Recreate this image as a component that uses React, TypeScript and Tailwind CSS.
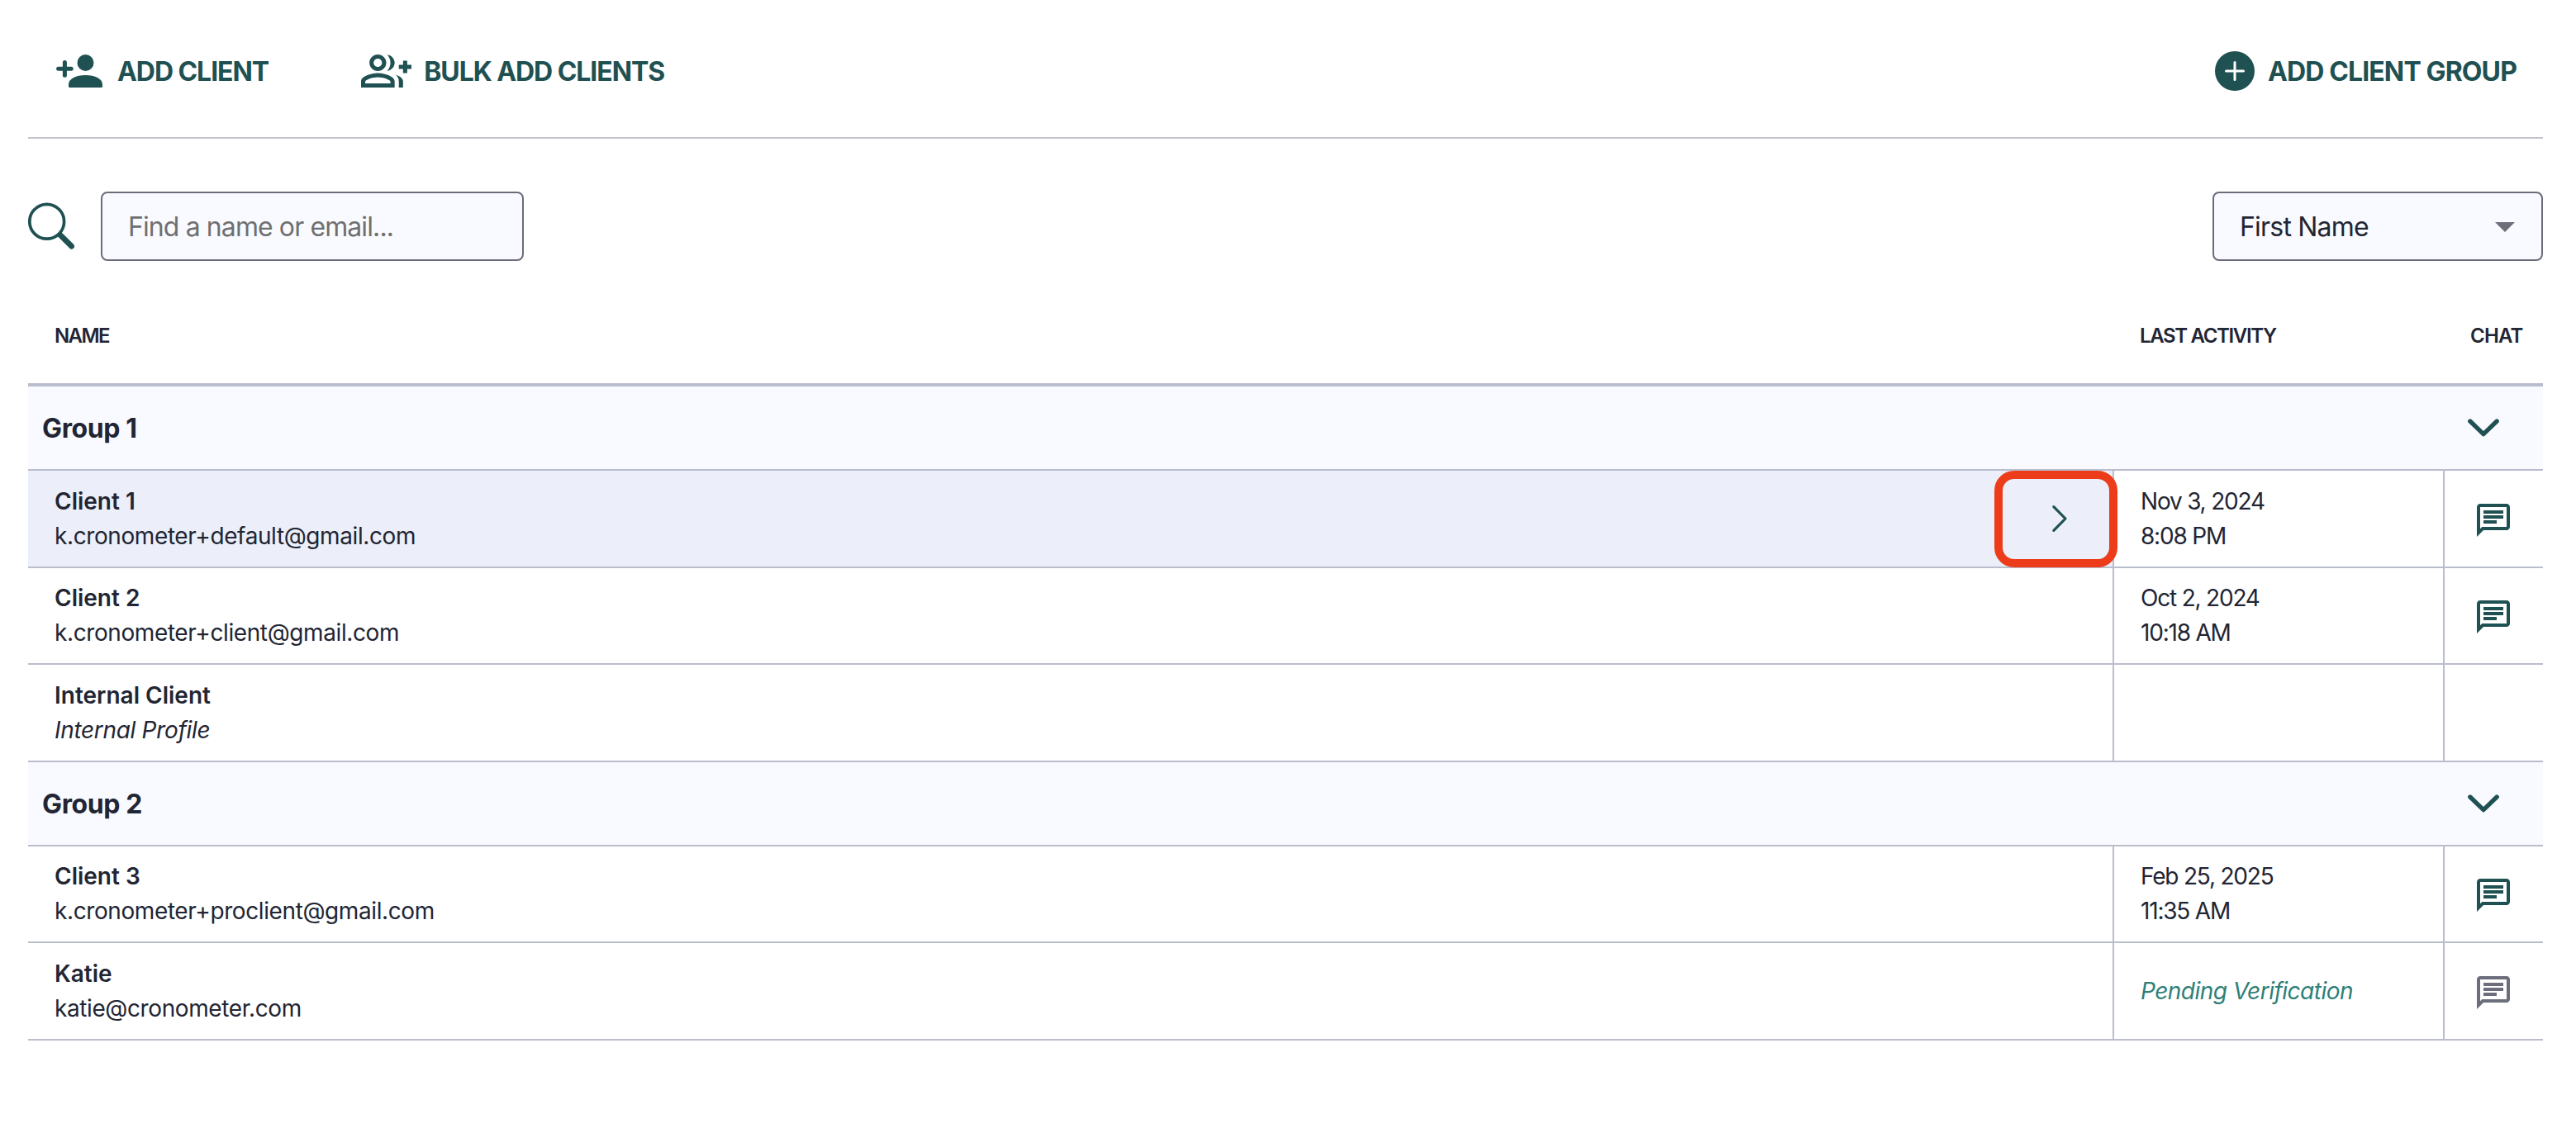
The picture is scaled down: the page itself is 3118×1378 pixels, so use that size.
import { useState } from 'react';

type Client = {
  name: string;
  detail: string;
  internal?: boolean;
  date?: string;
  time?: string;
  pending?: boolean;
  active?: boolean;
};

const groups: { name: string; clients: Client[] }[] = [
  {
    name: 'Group 1',
    clients: [
      { name: 'Client 1', detail: 'k.cronometer+default@gmail.com', date: 'Nov 3, 2024', time: '8:08 PM', active: true },
      { name: 'Client 2', detail: 'k.cronometer+client@gmail.com', date: 'Oct 2, 2024', time: '10:18 AM' },
      { name: 'Internal Client', detail: 'Internal Profile', internal: true },
    ],
  },
  {
    name: 'Group 2',
    clients: [
      { name: 'Client 3', detail: 'k.cronometer+proclient@gmail.com', date: 'Feb 25, 2025', time: '11:35 AM' },
      { name: 'Katie', detail: 'katie@cronometer.com', pending: true },
    ],
  },
];

function AddPersonIcon() {
  return (
    <svg className="w-14 h-10 shrink-0" viewBox="0 0 56 40" fill="currentColor">
      <circle cx="35.5" cy="10" r="10" />
      <path d="M15 38.5V36C15 29.5 24 25 35.5 25S56 29.5 56 36V38.5Q56 40 54.5 40H16.5Q15 40 15 38.5Z" />
      <path d="M10.4 9.5V25.2M2.6 17.3H18.2" stroke="currentColor" strokeWidth="5" strokeLinecap="round" />
    </svg>
  );
}

function AddPeopleIcon() {
  return (
    <svg className="w-[61px] h-10 shrink-0" viewBox="0 4 24 16" preserveAspectRatio="none" fill="currentColor">
      <path d="M22 9V7h-2v2h-2v2h2v2h2v-2h2V9z" />
      <path
        fillRule="evenodd"
        d="M8 12c2.21 0 4-1.79 4-4s-1.79-4-4-4-4 1.79-4 4 1.79 4 4 4zM8 6c1.1 0 2 .9 2 2s-.9 2-2 2-2-.9-2-2 .9-2 2-2z"
      />
      <path
        fillRule="evenodd"
        d="M8 13c-2.67 0-8 1.34-8 4v3h16v-3c0-2.66-5.33-4-8-4zM14 18H2v-.99C2.2 16.29 5.3 15 8 15s5.8 1.29 6 2v1z"
      />
      <path d="M12.51 4.05C13.43 5.11 14 6.49 14 8s-.57 2.89-1.49 3.95C14.47 11.7 16 10.04 16 8s-1.53-3.7-3.49-3.95z" />
      <path d="M16.53 13.83C17.42 14.66 18 15.7 18 17v3h2v-3c0-1.45-1.59-2.51-3.47-3.17z" />
    </svg>
  );
}

function PlusCircleIcon() {
  return (
    <svg className="w-12 h-12 shrink-0" viewBox="0 0 48 48" fill="none">
      <circle cx="24" cy="24" r="24" fill="currentColor" />
      <path d="M24 13.5V34.5M13.5 24H34.5" stroke="#fff" strokeWidth="3" strokeLinecap="round" />
    </svg>
  );
}

function SearchIcon() {
  return (
    <svg className="w-14 h-[57px] shrink-0 mb-0.5" viewBox="0 0 56 57" fill="none" stroke="currentColor" strokeLinecap="round">
      <circle cx="22.7" cy="23.3" r="20.9" strokeWidth="3.7" />
      <path d="M39.5 40.2L52.6 53.2" strokeWidth="6.8" />
    </svg>
  );
}

function ChatIcon() {
  return (
    <svg className="w-12 h-12 shrink-0" viewBox="0 0 24 24" fill="currentColor">
      <path d="M4 4h16v12H5.17L4 17.17V4m0-2c-1.1 0-1.99.9-1.99 2L2 22l4-4h14c1.1 0 2-.9 2-2V4c0-1.1-.9-2-2-2H4zm2 10h8v2H6v-2zm0-3h12v2H6V9zm0-3h12v2H6V6z" />
    </svg>
  );
}

function ChevronDown({ open }: { open: boolean }) {
  return (
    <svg className={`w-[38px] h-[22px] ${open ? '' : '-rotate-90'}`} viewBox="0 0 38 22" fill="none">
      <path d="M2.8 3L19 18.6L35.2 3" stroke="currentColor" strokeWidth="5.3" strokeLinecap="round" strokeLinejoin="round" />
    </svg>
  );
}

function ClientRow({ client }: { client: Client }) {
  return (
    <div className="flex h-[117.5px] border-b-2 border-[#b9bdcc] text-[28px] leading-[42px]">
      <div className={`relative flex-1 flex items-center justify-between pl-8 ${client.active ? 'bg-[#eceff9]' : ''}`}>
        <div>
          <div className="font-semibold">{client.name}</div>
          <div className={client.internal ? 'italic tracking-[-0.32px]' : 'tracking-[-0.4px]'}>{client.detail}</div>
        </div>
        {client.active && (
          <>
            <svg className="w-5 h-[34px] mr-[54px] text-[#1f5152]" viewBox="0 0 20 34" fill="none">
              <path d="M2.8 2.6L17 17L2.8 31.4" stroke="currentColor" strokeWidth="3.2" strokeLinecap="round" strokeLinejoin="round" />
            </svg>
            <div className="absolute z-10 top-0 -right-1.5 w-[149px] h-[117px] rounded-3xl border-[10px] border-[#ec3c1a]" />
          </>
        )}
      </div>
      <div className="w-[400px] border-l-2 border-[#b9bdcc] pl-8 flex flex-col justify-center tracking-[-1.2px]">
        {client.pending ? (
          <span className="italic tracking-[-0.53px] text-[#2e8079]">Pending Verification</span>
        ) : (
          <>
            <span>{client.date}</span>
            <span>{client.time}</span>
          </>
        )}
      </div>
      <div
        className={`w-[121px] border-l-2 border-[#b9bdcc] pl-[35px] pt-1 flex items-center ${
          client.pending ? 'text-[#6d6e7c]' : 'text-[#1f5152]'
        }`}
      >
        {!client.internal && <ChatIcon />}
      </div>
    </div>
  );
}

export default function App() {
  const [query, setQuery] = useState('');
  const [closed, setClosed] = useState<string[]>([]);

  const toggle = (name: string) =>
    setClosed((prev) => (prev.includes(name) ? prev.filter((n) => n !== name) : [...prev, name]));

  return (
    <div className="min-h-screen bg-white pl-[34px] pr-10 font-['Inter',sans-serif] text-[#222533]">
      {/* Actions */}
      <header className="flex items-center justify-between h-[168px] pt-1.5 border-b-2 border-[#c6c5cd] text-[#1f5152] text-[32px] font-bold tracking-[-1.05px]">
        <div className="flex items-center gap-28 pl-[34px]">
          <button className="flex items-center gap-[18px]">
            <AddPersonIcon />
            <span className="pt-0.5">ADD CLIENT</span>
          </button>
          <button className="flex items-center gap-[15px]">
            <AddPeopleIcon />
            <span className="pt-0.5">BULK ADD CLIENTS</span>
          </button>
        </div>
        <button className="flex items-center gap-4 pr-8 tracking-[-0.88px]">
          <PlusCircleIcon />
          <span className="pt-0.5">ADD CLIENT GROUP</span>
        </button>
      </header>

      {/* Search and sort */}
      <div className="flex items-center justify-between mt-16 text-[32px] tracking-[-0.9px]">
        <div className="flex items-center gap-8 text-[#1f5152]">
          <SearchIcon />
          <input
            value={query}
            onChange={(e) => setQuery(e.target.value)}
            placeholder="Find a name or email..."
            className="w-[512px] h-[84px] pl-[31px] pt-px rounded-lg border-2 border-[#6b6b7a] bg-[#f9faff] text-[#222533] placeholder:text-[#6f6f6f] outline-none"
          />
        </div>
        <button className="flex items-center justify-between w-[400px] h-[84px] pl-[31px] pr-8 rounded-lg border-2 border-[#6b6b7a] bg-[#f9faff] tracking-[-0.8px]">
          <span className="pt-0.5">First Name</span>
          <svg className="w-6 h-3 mt-0.5" viewBox="0 0 24 12" fill="#6d6e7a">
            <path d="M0 0H24L12 12Z" />
          </svg>
        </button>
      </div>

      {/* Client list */}
      <div className="flex h-[152px] pt-[75px] border-b-4 border-[#b9bdcc] text-2xl leading-8 font-semibold tracking-[-1.35px]">
        <div className="flex-1 pl-8 tracking-[-1.6px]">NAME</div>
        <div className="w-[400px] pl-[33px]">LAST ACTIVITY</div>
        <div className="w-[121px] pl-[33px] tracking-[-0.8px]">CHAT</div>
      </div>
      {groups.map((group) => (
        <section key={group.name}>
          <div className="flex items-center justify-between h-[102px] pl-[17px] pr-[53px] bg-[#f9faff] border-b-2 border-[#b9bdcc]">
            <h2 className="pt-0.5 text-[32px] leading-10 font-bold tracking-[-0.38px]">{group.name}</h2>
            <button onClick={() => toggle(group.name)} className="text-[#1f5152]">
              <ChevronDown open={!closed.includes(group.name)} />
            </button>
          </div>
          {!closed.includes(group.name) && group.clients.map((client) => <ClientRow key={client.name} client={client} />)}
        </section>
      ))}
    </div>
  );
}
